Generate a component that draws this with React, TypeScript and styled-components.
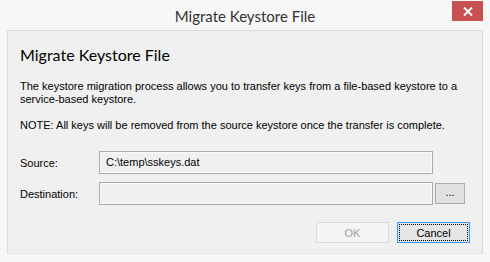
import React from 'react';
import styled, { createGlobalStyle } from 'styled-components';

const GlobalStyle = createGlobalStyle`
  html, body {
    margin: 0;
    padding: 0;
    background: #f7f7f7;
  }
`;

const Window = styled.div`
  width: 490px;
  height: 262px;
  background: #f7f7f7;
  display: flex;
  flex-direction: column;
  font-family: "Liberation Sans", Arial, sans-serif;
  overflow: hidden;
`;

const TitleBar = styled.div`
  height: 30px;
  display: flex;
  align-items: center;
  justify-content: center;
  position: relative;
`;

const Title = styled.span`
  font-family: Lato, "Open Sans", sans-serif;
  font-size: 15px;
  color: #333;
  margin-top: 2px;
`;

const CloseButton = styled.button`
  position: absolute;
  top: 1px;
  right: 7px;
  width: 31px;
  height: 20px;
  border: none;
  padding: 0;
  background: #c75050;
  display: flex;
  align-items: center;
  justify-content: center;
`;

const Panel = styled.div`
  margin: 0 7px;
  height: 224px;
  box-sizing: border-box;
  border: 1px solid #dadada;
  border-bottom-color: #e3e3e3;
  background: #f0f0f0;
  padding: 13px 12px 0 12px;
  display: flex;
  flex-direction: column;
`;

const Heading = styled.h1`
  margin: 0;
  font-family: Lato, "Open Sans", sans-serif;
  font-weight: normal;
  font-size: 16px;
  line-height: 22px;
  color: #000;
`;

const Text = styled.p<{ $top: number }>`
  margin: ${p => p.$top}px 0 0 0;
  font-size: 11px;
  line-height: 13px;
  color: #000;
`;

const Form = styled.div`
  margin-top: 19px;
  display: grid;
  grid-template-columns: 77px 334px 30px;
  column-gap: 2px;
  row-gap: 8px;
  align-items: center;
`;

const Label = styled.span`
  font-size: 11px;
  color: #000;
`;

const Field = styled.input`
  box-sizing: border-box;
  width: 334px;
  height: 23px;
  border: 1px solid #ababab;
  box-shadow: inset 0 0 0 1px #fafafa;
  background: #f0f0f0;
  font-family: "Liberation Sans", Arial, sans-serif;
  font-size: 11px;
  color: #000;
  padding: 0 0 2px 6px;
  outline: none;
`;

const Browse = styled.button`
  box-sizing: border-box;
  width: 30px;
  height: 21px;
  border: 1px solid #acacac;
  background: #e1e1e1;
  font-family: "Liberation Sans", Arial, sans-serif;
  font-size: 11px;
  padding: 0 0 3px 0;
  color: #000;
`;

const Actions = styled.div`
  margin-top: 17px;
  display: flex;
  justify-content: flex-end;
  gap: 8px;
`;

const DialogButton = styled.button<{ $focused?: boolean }>`
  box-sizing: border-box;
  width: 73px;
  height: 21px;
  font-family: "Liberation Sans", Arial, sans-serif;
  font-size: 11px;
  padding: 0;
  background: ${p => (p.$focused ? '#e5e5e5' : '#f4f4f4')};
  border: 1px solid ${p => (p.$focused ? '#3399ff' : '#dadada')};
  color: ${p => (p.$focused ? '#000' : '#a0a0a0')};
  display: flex;
  align-items: center;
  justify-content: center;
`;

const FocusRect = styled.span`
  box-sizing: border-box;
  width: 69px;
  height: 17px;
  border: 1px dotted #000;
  display: flex;
  align-items: center;
  justify-content: center;
`;

export default function App() {
  return (
    <>
      <GlobalStyle />
      <Window>
        <TitleBar>
          <Title>Migrate Keystore File</Title>
          <CloseButton>
            <svg width="10" height="9" viewBox="0 0 10 9">
              <path d="M1 0.5 L9 8.5 M9 0.5 L1 8.5" stroke="#fff" strokeWidth="2" />
            </svg>
          </CloseButton>
        </TitleBar>
        <Panel>
          <Heading>Migrate Keystore File</Heading>
          <Text $top={14}>
            The keystore migration process allows you to transfer keys from a file-based keystore to a
            <br />
            service-based keystore.
          </Text>
          <Text $top={13}>
            NOTE: All keys will be removed from the source keystore once the transfer is complete.
          </Text>
          <Form>
            <Label>Source:</Label>
            <Field readOnly value="C:\temp\sskeys.dat" />
            <span />
            <Label>Destination:</Label>
            <Field readOnly value="" />
            <Browse>...</Browse>
          </Form>
          <Actions>
            <DialogButton disabled>OK</DialogButton>
            <DialogButton $focused>
              <FocusRect>Cancel</FocusRect>
            </DialogButton>
          </Actions>
        </Panel>
      </Window>
    </>
  );
}
